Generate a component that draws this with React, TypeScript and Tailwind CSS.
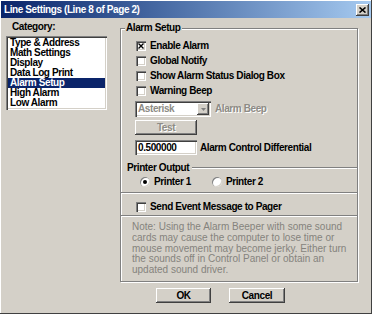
import type { ReactNode } from "react";

const raised =
	"bg-[#d4d0c8] shadow-[inset_-1px_-1px_0_#404040,inset_1px_1px_0_#fff,inset_-2px_-2px_0_#808080,inset_2px_2px_0_#d4d0c8]";
const sunken =
	"shadow-[inset_1px_1px_0_#808080,inset_2px_2px_0_#404040,inset_-1px_-1px_0_#fff,inset_-2px_-2px_0_#d4d0c8]";

const categories = [
	"Type & Address",
	"Math Settings",
	"Display",
	"Data Log Print",
	"Alarm Setup",
	"High Alarm",
	"Low Alarm",
];

const noteLines = [
	"Note: Using the Alarm Beeper with some sound",
	"cards may cause the computer to lose time or",
	"mouse movement may become jerky. Either turn",
	"the sounds off in Control Panel or obtain an",
	"updated sound driver.",
];

function CheckBox({ checked }: { checked?: boolean }) {
	return (
		<span
			className={`w-[10px] h-[10px] shrink-0 bg-white flex items-center justify-center ${sunken}`}
		>
			{checked && (
				<svg width="6" height="6" viewBox="0 0 6 6">
					<path d="M0.5 0.5L5.5 5.5M5.5 0.5L0.5 5.5" stroke="#000" strokeWidth="1.4" />
				</svg>
			)}
		</span>
	);
}

function Radio({ checked }: { checked?: boolean }) {
	return (
		<span className="w-[10px] h-[10px] shrink-0 rounded-full bg-white flex items-center justify-center shadow-[inset_1px_1px_0_#808080,inset_-1px_-1px_0_#d4d0c8]">
			{checked && <span className="w-[4px] h-[4px] rounded-full bg-black" />}
		</span>
	);
}

function Row({ children }: { children: ReactNode }) {
	return <div className="h-[15px] flex items-center pl-[15px] gap-[4px]">{children}</div>;
}

function Etched() {
	return <div className="border-t border-t-[#808080] border-b border-b-white" />;
}

export default function App() {
	return (
		<div className="w-[372px] h-[314px] bg-[#d4d0c8] flex flex-col p-[1px] shadow-[inset_-1px_-1px_0_#404040,inset_1px_1px_0_#fff] font-['Liberation_Sans',Arial,sans-serif] text-[10px] font-bold tracking-[-0.4px] text-black leading-[10px]">
			{/* title bar */}
			<div className="h-[17px] shrink-0 flex items-center justify-between pl-[3px] pr-[2px] bg-linear-to-r from-[#0a246a] to-[#a6caf0]">
				<span className="text-white">Line Settings (Line 8 of Page 2)</span>
				<span className={`w-[13px] h-[12px] flex items-center justify-center ${raised}`}>
					<svg width="7" height="6" viewBox="0 0 7 6">
						<path d="M0.5 0.5L6.5 5.5M6.5 0.5L0.5 5.5" stroke="#000" strokeWidth="1.6" />
					</svg>
				</span>
			</div>

			<div className="flex h-[264px] shrink-0">
				{/* category list */}
				<div className="w-[119px] shrink-0 flex flex-col">
					<div className="mt-[4px] pl-[11px] h-[10px]">Category:</div>
					<div className={`mt-[4px] ml-[5px] w-[101px] h-[74px] bg-white p-[2px] ${sunken}`}>
						{categories.map((c) => (
							<div
								key={c}
								className={`h-[10px] pl-[2px] ${c === "Alarm Setup" ? "bg-[#0a246a] text-white" : ""}`}
							>
								{c}
							</div>
						))}
					</div>
				</div>

				{/* alarm setup group */}
				<div className="mt-[10px] w-[238px] h-[254px] flex flex-col border border-[#808080] shadow-[1px_1px_0_#fff,inset_1px_1px_0_#fff]">
					<span className="-mt-[6px] ml-[4px] self-start px-[1px] bg-[#d4d0c8] h-[10px]">
						Alarm Setup
					</span>
					<div className="mt-[5px]">
						<Row>
							<CheckBox checked />
							<span>Enable Alarm</span>
						</Row>
						<Row>
							<CheckBox />
							<span>Global Notify</span>
						</Row>
						<Row>
							<CheckBox />
							<span>Show Alarm Status Dialog Box</span>
						</Row>
						<Row>
							<CheckBox />
							<span>Warning Beep</span>
						</Row>
					</div>

					<div className="mt-[3px] ml-[14px] flex items-center gap-[4px]">
						<div className={`w-[76px] h-[16px] bg-white flex items-center justify-between p-[2px] ${sunken}`}>
							<span className="pl-[1px] text-[#8d8b85]">Asterisk</span>
							<span className={`w-[12px] h-[12px] flex items-center justify-center ${raised}`}>
								<svg width="5" height="3" viewBox="0 0 5 3">
									<path d="M0 0H5L2.5 3Z" fill="#808080" />
								</svg>
							</span>
						</div>
						<span className="text-[#8d8b85] [text-shadow:1px_1px_0_#fff]">Alarm Beep</span>
					</div>

					<div
						className={`mt-[3px] ml-[14px] w-[62px] h-[15px] flex items-center justify-center text-[#8d8b85] [text-shadow:1px_1px_0_#fff] ${raised}`}
					>
						Test
					</div>

					<div className="mt-[5px] ml-[14px] flex items-center gap-[3px]">
						<div className={`w-[62px] h-[15px] bg-white flex items-center pl-[3px] ${sunken}`}>
							0.500000
						</div>
						<span>Alarm Control Differential</span>
					</div>

					{/* printer output */}
					<div className="mt-[8px] h-[10px] flex items-center">
						<span className="ml-[6px]">Printer Output</span>
						<div className="flex-1 ml-[3px]">
							<Etched />
						</div>
					</div>
					<div className="mt-[3px] h-[12px] flex items-center pl-[19px]">
						<Radio checked />
						<span className="ml-[4px]">Printer 1</span>
						<span className="ml-[21px]">
							<Radio />
						</span>
						<span className="ml-[4px]">Printer 2</span>
					</div>

					<div className="mt-[4px]">
						<Etched />
					</div>
					<div className="mt-[5px]">
						<Row>
							<CheckBox />
							<span>Send Event Message to Pager</span>
						</Row>
					</div>
					<div className="mt-[1px]">
						<Etched />
					</div>

					<div className="mt-[5px] ml-[11px] font-normal tracking-normal leading-[10.75px] text-[#85837d]">
						{noteLines.map((l) => (
							<div key={l}>{l}</div>
						))}
					</div>
				</div>
			</div>

			{/* buttons */}
			<div className="mt-[6px] pl-[155px] flex gap-[18px]">
				<div className={`w-[55px] h-[15px] flex items-center justify-center ${raised}`}>OK</div>
				<div className={`w-[56px] h-[15px] flex items-center justify-center ${raised}`}>Cancel</div>
			</div>
		</div>
	);
}
